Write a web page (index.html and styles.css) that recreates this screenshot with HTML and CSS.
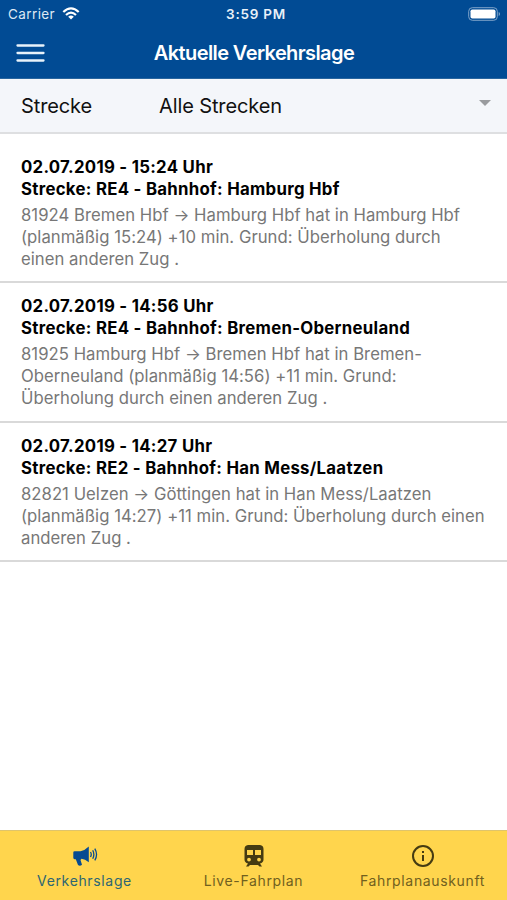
FILE: index.html
```html
<!DOCTYPE html>
<html lang="de">
<head>
<meta charset="utf-8">
<title>Aktuelle Verkehrslage</title>
<link rel="stylesheet" href="styles.css">
</head>
<body>
<header class="header">
  <div class="status">
    <div class="carrier"><span>Carrier</span>
      <svg class="wifi" width="18" height="13" viewBox="0 0 18 13" fill="none" stroke="#fff" stroke-width="2.2"><path d="M1.3 5Q9-2.3 16.7 5M4 8Q9 3.3 14 8"/><path d="M9 12.5 6.2 9.8Q9 7.4 11.8 9.8Z" fill="#fff" stroke="none"/></svg>
    </div>
    <span class="clock">3:59 PM</span>
    <svg class="battery" width="33" height="14" viewBox="0 0 33 14"><rect x=".7" y=".7" width="28.6" height="12.6" rx="3.6" fill="none" stroke="#7fa3c9" stroke-width="1"/><rect x="2.5" y="2.5" width="25" height="9" rx="1.8" fill="#fff"/><path d="M30.700 5v4Q32 8.500 32 7T30.700 5Z" fill="#7fa3c9"/></svg>
  </div>
  <div class="navbar">
    <svg class="menu" width="29" height="18" viewBox="0 0 29 18" stroke="#e8f2fa" stroke-width="2.3" stroke-linecap="round"><path d="M1.500 1.500h26M1.500 9h26M1.500 16.500h26"/></svg>
    <h1 class="title">Aktuelle Verkehrslage</h1>
    <span></span>
  </div>
</header>
<div class="filter">
  <span class="filter-label">Strecke</span>
  <span class="filter-value">Alle Strecken</span>
  <svg class="caret" width="12" height="6" viewBox="0 0 12 6"><path d="M0 0h12L6 6Z" fill="#999b9e"/></svg>
</div>
<main class="list">
  <article class="item">
    <h2 class="head">02.07.2019 - 15:24 Uhr<br>Strecke: RE4 - Bahnhof: Hamburg Hbf</h2>
    <p class="text">81924 Bremen Hbf → Hamburg Hbf hat in Hamburg Hbf<br>(planmäßig 15:24) +10 min. Grund: Überholung durch<br>einen anderen Zug .</p>
  </article>
  <article class="item">
    <h2 class="head">02.07.2019 - 14:56 Uhr<br>Strecke: RE4 - Bahnhof: Bremen-Oberneuland</h2>
    <p class="text">81925 Hamburg Hbf → Bremen Hbf hat in Bremen-<br>Oberneuland (planmäßig 14:56) +11 min. Grund:<br>Überholung durch einen anderen Zug .</p>
  </article>
  <article class="item">
    <h2 class="head">02.07.2019 - 14:27 Uhr<br>Strecke: RE2 - Bahnhof: Han Mess/Laatzen</h2>
    <p class="text">82821 Uelzen → Göttingen hat in Han Mess/Laatzen<br>(planmäßig 14:27) +11 min. Grund: Überholung durch einen<br>anderen Zug .</p>
  </article>
</main>
<nav class="tabs">
  <div class="tab active">
    <svg width="26" height="24" viewBox="0 0 26 24"><path d="M1.300 8.500Q1.300 7.200 2.600 7.200H8.500Q13 6.500 16.800 2.600V18.200Q13 15 9.500 14.800L8.500 16 10 20.800Q8 22.500 6 21L3.800 15.200H2.600Q1.300 15.200 1.300 13.800Z" fill="#064a91"/><path d="M18.500 8Q20 10.500 18.500 13M20.700 6.300Q23 10.500 20.700 14.700M22.800 4.600Q26.300 10.500 22.800 16.400" fill="none" stroke="#064a91" stroke-width="1.300"/></svg>
    <span>Verkehrslage</span>
  </div>
  <div class="tab">
    <svg width="26" height="24" viewBox="0 0 26 24"><path fill="#453b12" fill-rule="evenodd" d="M7 1H19Q22.500 1.500 22.500 5V15.500Q22.500 18.500 19 19.500L21 22.500H18.500L17 21H9L7.500 22.500H5L7 19.500Q3.500 18.500 3.500 15.500V5Q3.500 1.500 7 1ZM6 6V11H12V6ZM14 6V11H20V6ZM8 13.700A1.900 1.900 0 1 0 8 17.500 1.900 1.900 0 1 0 8 13.700ZM18 13.700A1.900 1.900 0 1 0 18 17.500 1.900 1.900 0 1 0 18 13.700Z"/></svg>
    <span>Live-Fahrplan</span>
  </div>
  <div class="tab">
    <svg width="26" height="24" viewBox="0 0 26 24"><circle cx="13" cy="12" r="10" fill="none" stroke="#453b12" stroke-width="2"/><path d="M12 11h2v6h-2zM12 7h2v2h-2z" fill="#453b12"/></svg>
    <span>Fahrplanauskunft</span>
  </div>
</nav>
</body>
</html>
```
FILE: styles.css
```css
* { box-sizing: border-box; }
body { margin: 0; width: 507px; height: 900px; display: flex; flex-direction: column; background: #fff; font-family: Inter, "Liberation Sans", sans-serif; overflow: hidden; }
svg { display: block; flex: none; }
.header { height: 79px; background: #014b94; color: #fff; border-bottom: 1px solid #28659f; }
.status { height: 27px; padding: 0 6px 0 8px; display: grid; grid-template-columns: 1fr auto 1fr; align-items: center; font-size: 13.5px; }
.carrier { display: flex; align-items: center; gap: 7px; letter-spacing: .4px; color: #dce8f3; }
.clock { padding-left: 3px; font-weight: 600; letter-spacing: .75px; color: #e9f1f8; }
.battery { justify-self: end; }
.navbar { height: 51px; padding: 0 15px 0 16px; display: grid; grid-template-columns: 1fr auto 1fr; align-items: center; }
.title { margin: 0; font-size: 20px; font-weight: 600; letter-spacing: -.6px; white-space: nowrap; }
.filter { height: 55px; padding: 0 16px 0 21px; background: #f4f6fa; border-bottom: 2px solid #dedfe1; display: flex; align-items: center; font-size: 20px; letter-spacing: -.12px; color: #111; }
.filter-label { width: 138px; }
.filter-value { flex: 1; }
.caret { margin-bottom: 6px; }
.list { flex: 1; }
.item { padding: 22px 0 11.3px 21px; border-bottom: 2px solid #d9d9d9; white-space: nowrap; }
.item + .item { padding-top: 12px; }
.head { margin: 0 0 4px; font-size: 16.8px; line-height: 22px; font-weight: 650; letter-spacing: .28px; color: #000; }
.text { margin: 0; font-size: 16.7px; line-height: 22px; letter-spacing: .03px; color: #777; }
.tabs { height: 70px; background: #ffd54d; border-top: 1px solid #dfc46b; display: grid; grid-template-columns: repeat(3, 1fr); }
.tab { display: flex; flex-direction: column; align-items: center; padding-top: 13px; font-size: 14px; line-height: 17px; letter-spacing: .65px; color: #70601f; gap: 4px; white-space: nowrap; }
.active { color: #2d6673; }
```
